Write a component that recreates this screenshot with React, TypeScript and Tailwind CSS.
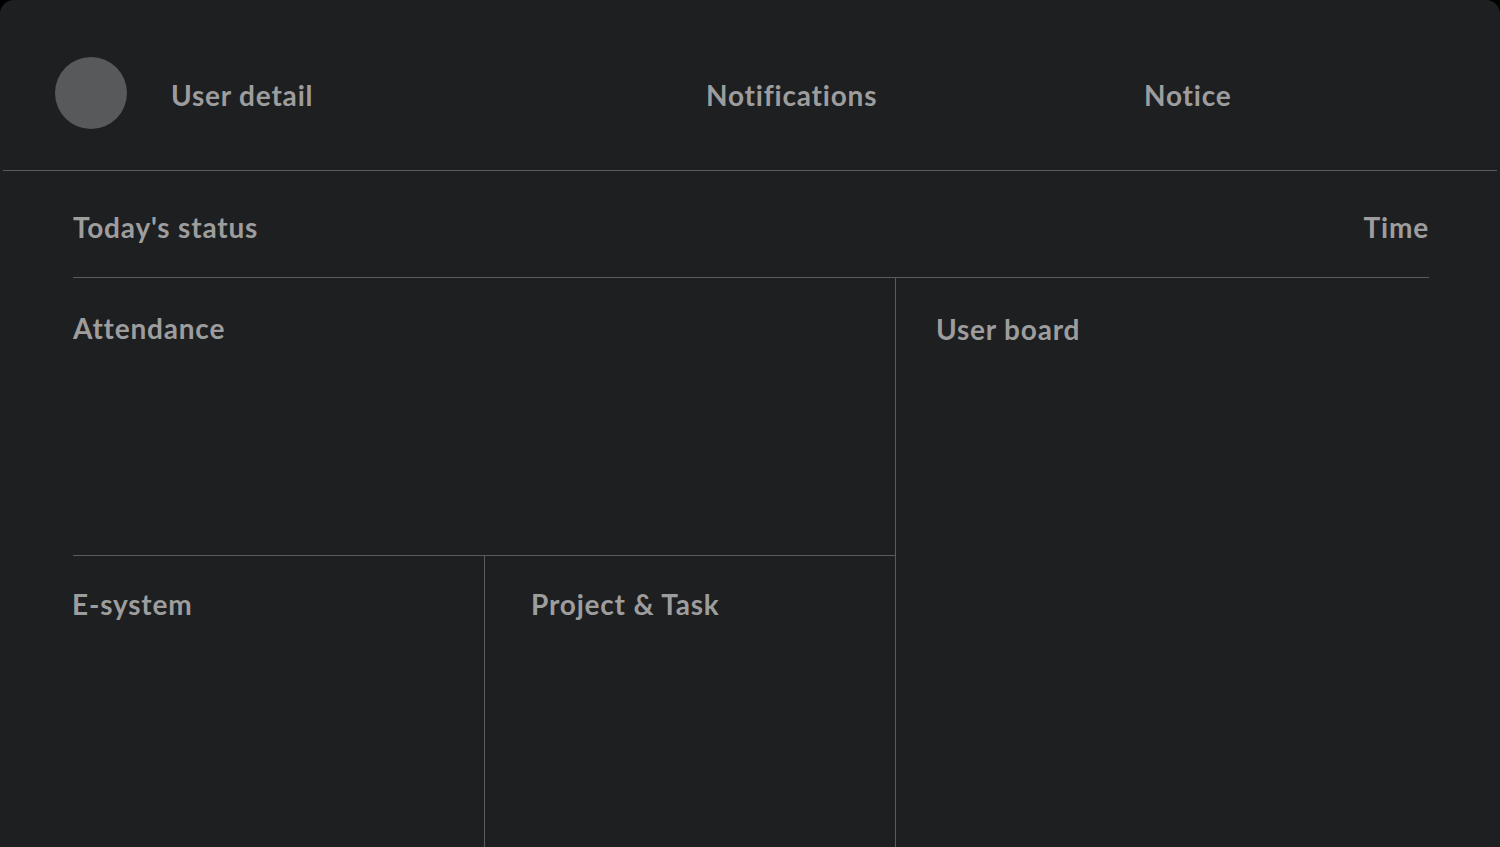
export default function App() {
  const label = "text-[28px] font-bold text-[#9d9d9d] leading-none tracking-[0.8px]";
  return (
    <div className="w-full h-[847px] bg-black font-['Lato','Liberation_Sans',sans-serif]">
      <div className="h-full rounded-t-[14px] bg-[#1e1f21] overflow-hidden flex flex-col">
        {/* header */}
        <div className="h-[171px] shrink-0 flex items-center pt-[16px] border-b border-[#5a5b5d] mx-[3px]">
          <div className="ml-[52px] w-[72px] h-[72px] rounded-full bg-[#58595b]" />
          <div className={`ml-[44px] w-[535px] mt-[3px] ${label}`}>User detail</div>
          <div className={`w-[438px] mt-[3px] ${label}`}>Notifications</div>
          <div className={`mt-[3px] ${label}`}>Notice</div>
        </div>

        <div className="flex-1 flex flex-col pl-[73px] pr-[71px]">
          {/* today's status */}
          <div className="h-[107px] shrink-0 flex items-center justify-between pt-[6px] border-b border-[#5a5b5d]">
            <div className={label}>Today's status</div>
            <div className={label}>Time</div>
          </div>

          <div className="flex-1 flex">
            <div className="w-[823px] flex flex-col border-r border-[#5a5b5d]">
              <div className="h-[278px] shrink-0 pt-[36px] border-b border-[#5a5b5d]">
                <div className={label}>Attendance</div>
              </div>
              <div className="flex-1 flex">
                <div className="w-[412px] pt-[34px] border-r border-[#5a5b5d]">
                  <div className={`-ml-[1px] ${label}`}>E-system</div>
                </div>
                <div className="flex-1 pt-[34px] pl-[46px]">
                  <div className={label}>Project &amp; Task</div>
                </div>
              </div>
            </div>
            <div className="flex-1 pt-[37px] pl-[40px]">
              <div className={label}>User board</div>
            </div>
          </div>
        </div>
      </div>
    </div>
  );
}
